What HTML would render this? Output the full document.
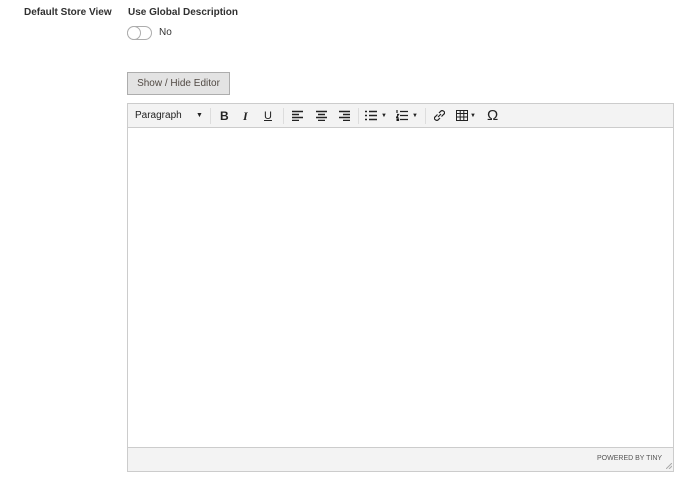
<!DOCTYPE html>
<html><head><style>
body{margin:0;width:685px;height:488px;background:#fff;font-family:"Liberation Sans",sans-serif;color:#333;position:relative;overflow:hidden}
.a{position:absolute}
.lbl{font-size:10px;font-weight:bold;color:#303030}
.tb span{position:absolute;top:0;font-size:12px;color:#222;line-height:24px}
.tb svg{position:absolute;top:6px}
.sep{position:absolute;top:4px;width:1px;height:16px;background:#ddd}
</style></head><body>
<div class="a lbl" style="left:24px;top:7px">Default Store View</div>
<div class="a lbl" style="left:128px;top:7px">Use Global Description</div>
<div class="a" style="left:127px;top:26px;width:23px;height:12px;border:1px solid #adadad;border-radius:7px;background:#fff"></div>
<div class="a" style="left:127px;top:26px;width:12px;height:12px;border:1px solid #adadad;border-radius:50%;background:#fff"></div>
<div class="a" style="left:159px;top:27px;font-size:10px;color:#333">No</div>
<div class="a" style="left:127px;top:72px;width:101px;height:21px;background:#e3e3e3;border:1px solid #adadad;font-size:10px;line-height:21px;text-align:center;color:#514943">Show / Hide Editor</div>
<div class="a" style="left:127px;top:103px;width:545px;height:367px;border:1px solid #ccc;background:#fff"></div>
<div class="a tb" style="left:128px;top:104px;width:545px;height:23px;background:#f3f3f3;border-bottom:1px solid #ccc">
<span style="left:7px;font-size:10px">Paragraph</span>
<span style="left:68px;font-size:7px">▼</span>
<div class="sep" style="left:82px"></div>
<span style="left:92px;font-weight:bold">B</span>
<span style="left:115px;font-style:italic;font-weight:bold;font-family:'Liberation Serif',serif">I</span>
<span style="left:136px;text-decoration:underline;font-size:11px">U</span>
<div class="sep" style="left:155px"></div>
<svg style="left:164px" width="11" height="11" stroke="#222" stroke-width="1.4"><path d="M0 1.5H11M0 4.5H7M0 7.5H11M0 10.5H7"/></svg>
<svg style="left:188px" width="11" height="11" stroke="#222" stroke-width="1.4"><path d="M0 1.5H11M2 4.5H9M0 7.5H11M2 10.5H9"/></svg>
<svg style="left:211px" width="11" height="11" stroke="#222" stroke-width="1.4"><path d="M0 1.5H11M4 4.5H11M0 7.5H11M4 10.5H11"/></svg>
<div class="sep" style="left:230px"></div>
<svg style="left:237px" width="12" height="11" stroke="#222" stroke-width="1.4"><path d="M0 1.5H2M4 1.5H12M0 5.5H2M4 5.5H12M0 9.5H2M4 9.5H12"/></svg>
<span style="left:253px;font-size:6px">▼</span>
<svg style="left:268px" width="12" height="11" stroke="#222" stroke-width="1.2"><path d="M1 0V3M1 4.5H2.5L0.5 7.5H2.5M0.5 9H2.5V11H0.5M4 1.5H12M4 5.5H12M4 9.5H12"/></svg>
<span style="left:284px;font-size:6px">▼</span>
<div class="sep" style="left:297px"></div>
<svg style="left:306px" width="11" height="11" fill="none" stroke="#222" stroke-width="1.2"><path d="M5 3L7 1Q8.5 0 10 1.5T9.5 4.5L7.5 6.5M6 8L4 10Q2.5 11 1 9.5T1.5 6.5L3.5 4.5M4 7L7 4"/></svg>
<svg style="left:328px" width="12" height="11" fill="none" stroke="#222" stroke-width="1"><path d="M.5.5H11.5V10.5H.5ZM.5 3.5H11.5M.5 7H11.5M4.2 .5V10.5M7.8 .5V10.5"/></svg>
<span style="left:342px;font-size:6px">▼</span>
<span style="left:359px;font-size:15px">Ω</span>
</div>
<div class="a" style="left:128px;top:447px;width:545px;height:23px;background:#f3f3f3;border-top:1px solid #ccc"></div>
<div class="a" style="left:597px;top:455px;font-size:7px;color:#555">POWERED BY TINY</div>
<svg class="a" style="left:666px;top:463px" width="6" height="6" stroke="#aaa"><path d="M0 6L6 0M3 6L6 3"/></svg>
</body></html>
